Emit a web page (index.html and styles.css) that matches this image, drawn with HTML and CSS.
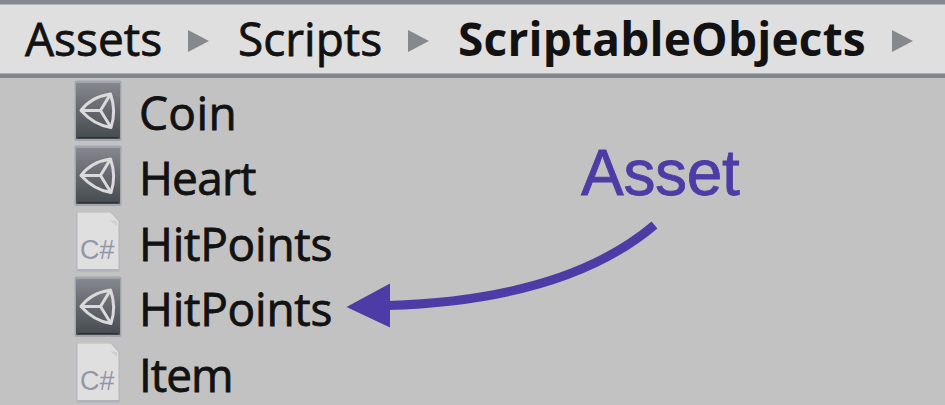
FILE: index.html
```html
<!DOCTYPE html>
<html lang="en">
<head>
<meta charset="utf-8">
<title>ScriptableObjects</title>
<link rel="stylesheet" href="styles.css">
</head>
<body>
<svg class="defs" width="0" height="0" aria-hidden="true">
  <defs>
    <linearGradient id="tile" x1="0" y1="0" x2="0" y2="1">
      <stop offset="0" stop-color="#85888e"/>
      <stop offset="0.35" stop-color="#6d7177"/>
      <stop offset="1" stop-color="#464b50"/>
    </linearGradient>
    <symbol id="asset" viewBox="0 0 48 62">
      <rect x="0.5" y="0.5" width="47" height="60.5" rx="2" fill="#a2a5ae"/>
      <rect x="2" y="3" width="44" height="56" rx="1" fill="url(#tile)"/>
      <path d="M4 57.5H44" stroke="#2b2e31" stroke-width="1"/>
      <g fill="none" stroke="#dadada" stroke-width="3" stroke-linejoin="round">
        <path d="M7 30.500Q17 17 36.500 14Q42.500 31 37 47.500Q20 45 7 30.500Z"/>
        <path d="M7 30.500H26.500L36.500 14M26.500 30.500L37 47.500"/>
      </g>
    </symbol>
    <symbol id="script" viewBox="0 0 48 62">
      <path d="M2.500 1.500H37L45.500 10V60.500H2.500Z" fill="#b0b2bb"/>
      <path d="M3.500 1.500H36.500L44.500 10V58H3.500Z" fill="#dfdfdf"/>
      <path d="M36 9l7 1v5z" fill="#cfcfcf"/>
    </symbol>
  </defs>
</svg>
<nav class="path">
  <span class="assets">Assets</span><i class="sep"></i>
  <span class="scripts">Scripts</span><i class="sep"></i>
  <b class="current">ScriptableObjects</b><i class="sep"></i>
</nav>
<ul class="files">
  <li><span class="icon"><svg><use href="#asset"/></svg></span><span class="coin">Coin</span></li>
  <li><span class="icon"><svg><use href="#asset"/></svg></span><span class="heart">Heart</span></li>
  <li><span class="icon"><svg><use href="#script"/></svg><em>C#</em></span><span class="hit">HitPoints</span></li>
  <li><span class="icon"><svg><use href="#asset"/></svg></span><span class="hit">HitPoints</span></li>
  <li><span class="icon"><svg><use href="#script"/></svg><em>C#</em></span><span class="item">Item</span></li>
</ul>
<div class="note">Asset</div>
<svg class="arrow" width="320" height="115" viewBox="340 218 320 115">
  <path d="M388 305.500C497 302 592 278 654.500 225" fill="none" stroke="#4e3ca6" stroke-width="9"/>
  <path d="M346.500 307L390 283.500V327.500Z" fill="#4e3ca6"/>
</svg>
</body>
</html>
```
FILE: styles.css
```css
* { box-sizing: border-box; }
body {
  margin: 0;
  width: 945px;
  height: 405px;
  overflow: hidden;
  position: relative;
  background: #c2c2c2;
  color: #121212;
  font: 46px/65px "Open Sans", "Noto Sans", sans-serif;
  -webkit-text-stroke: 0.8px currentColor;
}
.defs { position: absolute; }
.path {
  display: flex;
  align-items: center;
  height: 78px;
  padding: 0 0 1px 25px;
  background: #dfdfdf;
  border-top: 4px solid #85888e;
  border-bottom: 4px solid #83868c;
  box-shadow: inset 0 1px #b4b4b8, inset 0 -1px #aaacb5;
  white-space: nowrap;
}
.path span, .path b { flex: none; }
.assets { width: 163px; }
.scripts { width: 170px; }
.current {
  width: 434px;
  font-weight: 700;
  letter-spacing: 0.2px;
  -webkit-text-stroke: 0;
}
.sep {
  flex: none;
  width: 21px;
  height: 22px;
  margin-top: 5px;
  background: #85888c;
  clip-path: polygon(0 0, 100% 50%, 0 100%);
}
.sep + span { margin-left: 29px; }
.sep + b { margin-left: 29px; }
.files {
  list-style: none;
  margin: 0;
  padding: 2px 0 0 74px;
}
.files li {
  display: flex;
  height: 65.4px;
  white-space: nowrap;
}
.icon {
  position: relative;
  width: 48px;
  height: 62px;
  margin-right: 17px;
}
.coin { letter-spacing: 0.4px; }
.heart { letter-spacing: -0.8px; }
.hit { letter-spacing: -0.25px; }
.item { letter-spacing: -1px; }
.icon svg { display: block; width: 48px; height: 62px; }
.icon em {
  position: absolute;
  left: 6px;
  top: 23px;
  font: 27px/32px "Liberation Sans", sans-serif;
  color: #9496a8;
  -webkit-text-stroke: 0;
}
.note {
  position: absolute;
  left: 581px;
  top: 137px;
  font: 64px/72px "Liberation Sans", sans-serif;
  letter-spacing: -0.3px;
  color: #4e3ca6;
}
.arrow { position: absolute; left: 340px; top: 218px; }
```
